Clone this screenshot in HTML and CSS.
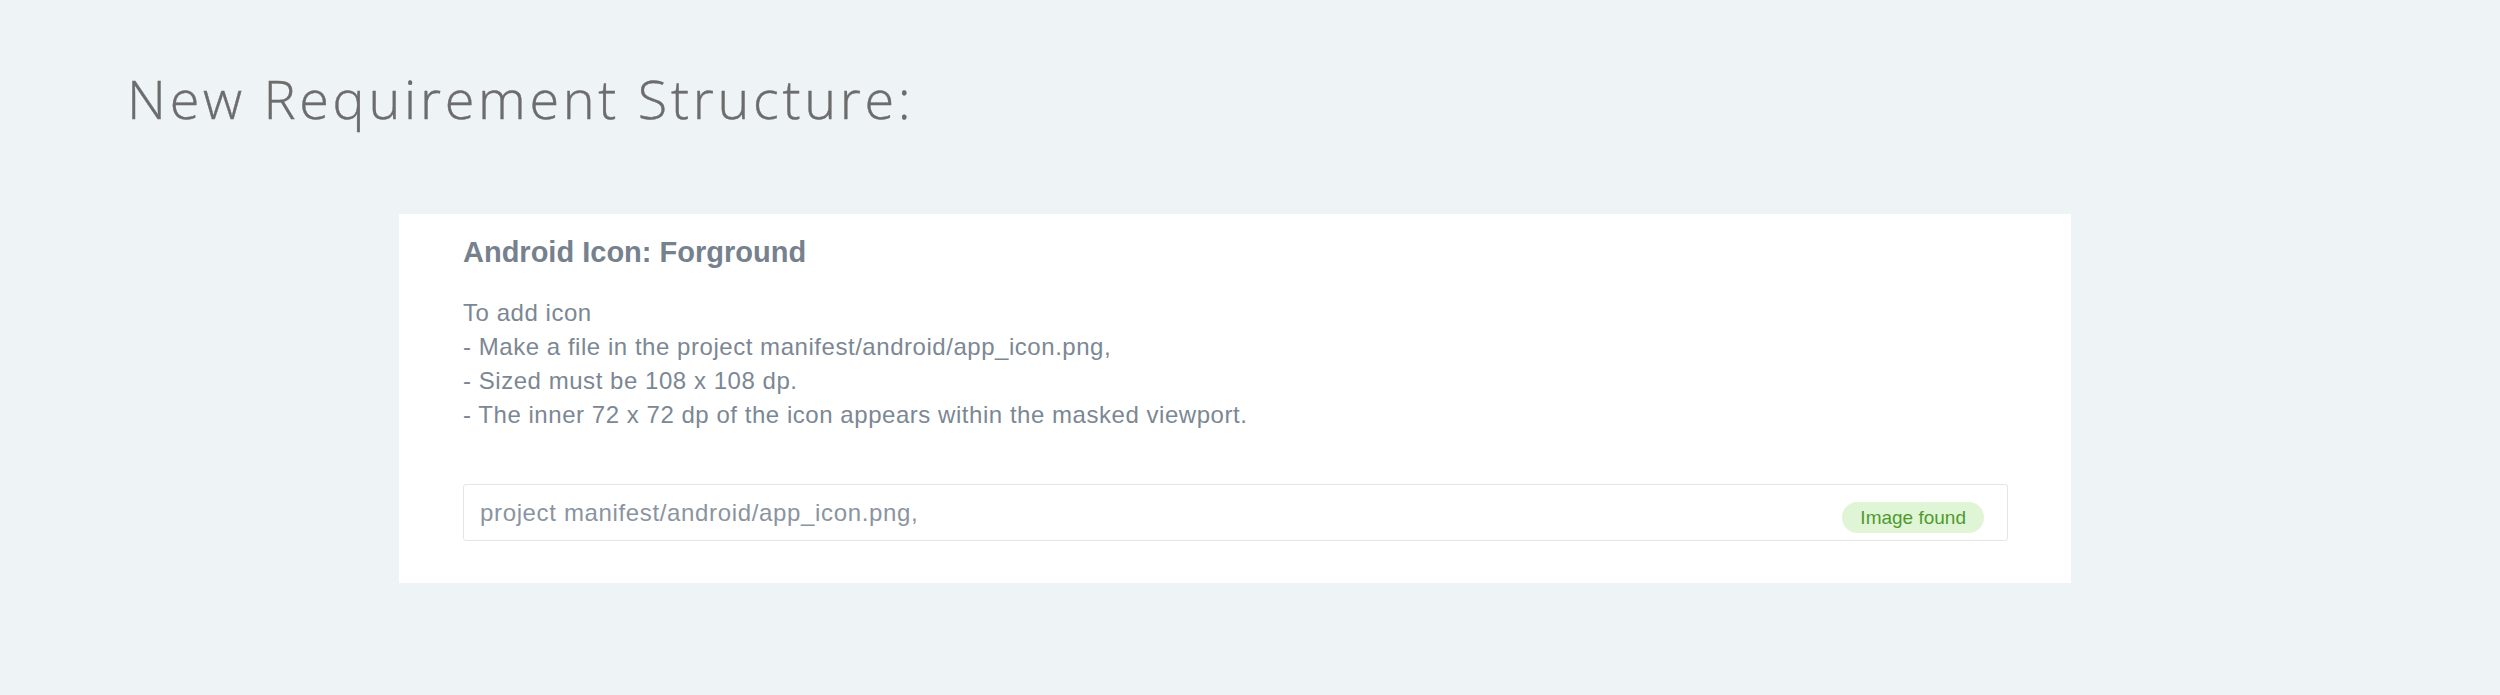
FILE: index.html
```html
<!DOCTYPE html>
<html lang="en">
<head>
<meta charset="utf-8">
<title>New Requirement Structure</title>
<link rel="stylesheet" href="styles.css">
</head>
<body>
<main class="page">
  <h1 class="page-title">New Requirement Structure:</h1>
  <section class="card">
    <h2 class="card-title">Android Icon: Forground</h2>
    <div class="card-text">
      <p>To add icon</p>
      <p>- Make a file in the project manifest/android/app_icon.png,</p>
      <p>- Sized must be 108 x 108 dp.</p>
      <p>- The inner 72 x 72 dp of the icon appears within the masked viewport.</p>
    </div>
    <div class="path-field">
      <span class="path-text">project manifest/android/app_icon.png,</span>
      <span class="badge">Image found</span>
    </div>
  </section>
</main>
</body>
</html>
```
FILE: styles.css
```css
html, body {
  margin: 0;
  padding: 0;
  background: #eef3f6;
}

.page {
  padding: 71px 0 0 127px;
}

.page-title {
  margin: 0;
  font-family: "Open Sans", "Noto Sans", sans-serif;
  font-weight: 300;
  font-size: 54px;
  line-height: 54px;
  letter-spacing: 3.7px;
  color: #6c6c6c;
  -webkit-text-stroke: 0.4px #6c6c6c;
}

.card {
  box-sizing: border-box;
  margin: 89px 0 0 272px;
  width: 1672px;
  height: 369px;
  background: #ffffff;
  padding: 21px 63px 0 64px;
  font-family: "Liberation Sans", Arial, sans-serif;
}

.card-title {
  margin: 0;
  font-size: 29px;
  line-height: 34px;
  font-weight: 700;
  color: #76818e;
}

.card-text {
  margin-top: 27px;
  font-size: 24px;
  line-height: 34px;
  letter-spacing: 0.54px;
  color: #7c8794;
}

.card-text p {
  margin: 0;
}

.path-field {
  box-sizing: border-box;
  margin-top: 52px;
  height: 57px;
  border: 1px solid #e3e5e7;
  border-radius: 3px;
  display: flex;
  align-items: center;
  justify-content: space-between;
  padding: 0 23px 0 16px;
}

.path-text {
  font-size: 24px;
  letter-spacing: 0.65px;
  color: #8a949f;
}

.badge {
  align-self: flex-end;
  margin-bottom: 7px;
  height: 31px;
  line-height: 31px;
  padding: 0 18px;
  border-radius: 16px;
  background: #e0f5d5;
  color: #4f9a2f;
  font-size: 19px;
}
```
